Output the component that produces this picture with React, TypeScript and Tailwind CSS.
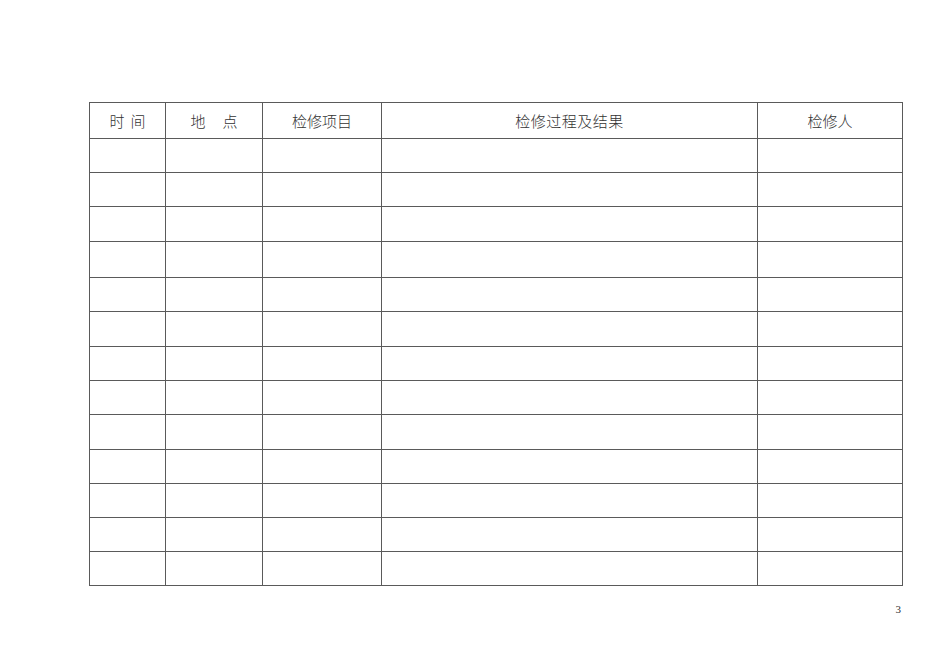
import React from "react";

const rowHeights = [
  "h-[34px]", "h-[34px]", "h-[35px]", "h-[36px]", "h-[34px]", "h-[35px]", "h-[34px]",
  "h-[34px]", "h-[35px]", "h-[34px]", "h-[34px]", "h-[34px]", "h-[34px]",
];

const cols = ["w-[76px]", "w-[97px]", "w-[119px]", "w-[376px]", "w-[145px]"];

export default function App() {
  const cell = "border border-[#5a5a5a] p-0";
  return (
    <div
      className="w-[950px] h-[672px] bg-white flex flex-col"
      style={{ fontFamily: '"Noto Sans CJK SC", "Noto Sans", sans-serif' }}
    >
      <div className="pt-[102px] pl-[89px]">
        <table className="border-collapse table-fixed w-[813px] text-[15px] text-[#333] font-light leading-none">
          <colgroup>
            {cols.map((c, i) => (
              <col key={i} className={c} />
            ))}
          </colgroup>
          <thead>
            <tr className="h-[36px]">
              <th className={`${cell} font-light text-center`}>
                <span className="inline-flex gap-[6px]"><span>时</span><span>间</span></span>
              </th>
              <th className={`${cell} font-light text-center`}>
                <span className="inline-flex gap-[17px]"><span>地</span><span>点</span></span>
              </th>
              <th className={`${cell} font-light text-center`}>检修项目</th>
              <th className={`${cell} font-light text-center`}>
                <span className="tracking-[0.5px]">检修过程及结果</span>
              </th>
              <th className={`${cell} font-light text-center`}>检修人</th>
            </tr>
          </thead>
          <tbody>
            {rowHeights.map((h, i) => (
              <tr key={i} className={h}>
                <td className={cell}></td>
                <td className={cell}></td>
                <td className={cell}></td>
                <td className={cell}></td>
                <td className={cell}></td>
              </tr>
            ))}
          </tbody>
        </table>
      </div>
      <div className="flex justify-end pr-[49px] pt-[18px]">
        <span
          className="text-[11px] text-[#333] leading-none"
          style={{ fontFamily: '"Liberation Serif", serif' }}
        >
          3
        </span>
      </div>
    </div>
  );
}
